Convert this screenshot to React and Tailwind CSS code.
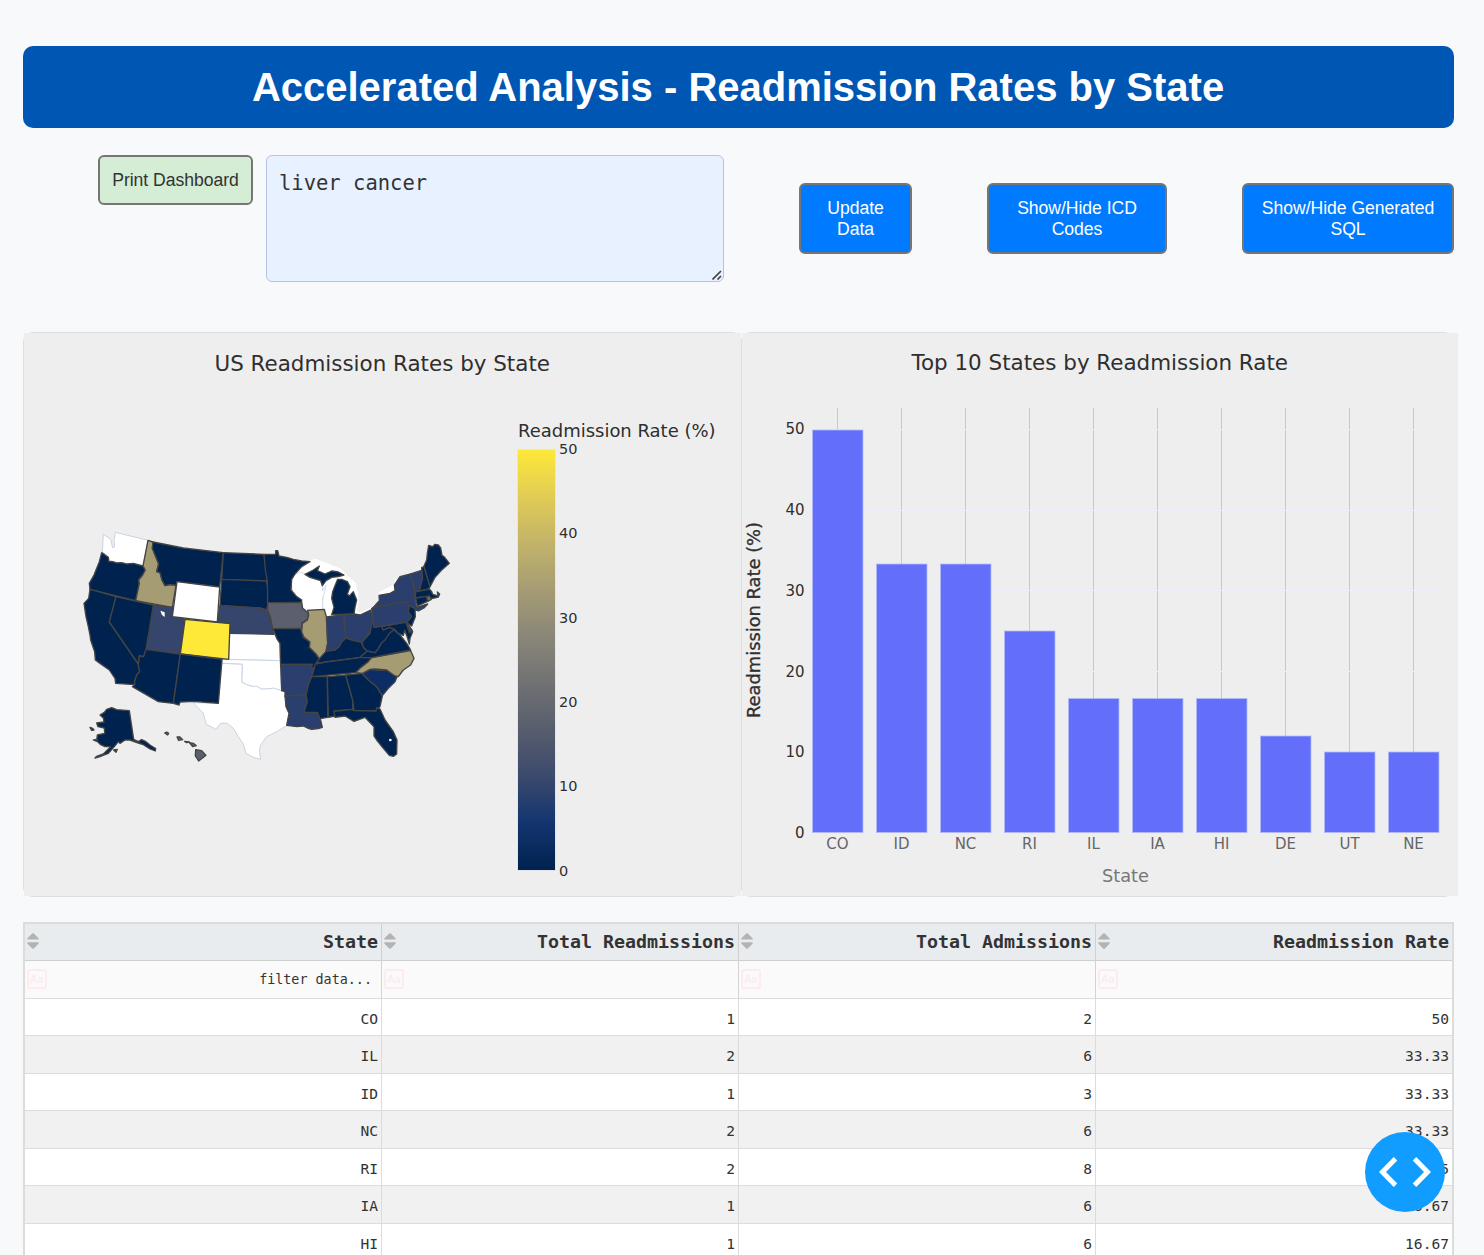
import React from "react";

const NAVY = "#00224e";
const SLATE = "#35456c";
const BLUE = "#2a3f6d";
const TAN = "#a59c74";
const GRAY = "#5b5f6e";

const STATES = [
  ["OR", NAVY, "95,98 104,104 115,112 117,125 125,124 140,129 155,128 170,132 190,130 219,138 226,150 218,165 206,180 208,190 197,242 60,208 58,190 72,165 88,125"],
  ["ID", TAN, "234,61 249,66 247,85 254,102 266,132 260,155 270,158 276,180 285,197 300,194 318,196 307,262 197,242 208,190 206,180 218,165 226,150 219,138"],
  ["MT", NAVY, "249,66 340,84 460,98 449,201 321,185 318,196 300,193 285,197 276,180 270,158 260,155 266,132 254,102 247,85"],
  ["ND", NAVY, "460,98 582,103 586,130 592,183 455,178"],
  ["SD", NAVY, "455,178 592,183 590,190 594,200 594,255 588,270 570,264 550,263 450,256"],
  ["NE", SLATE, "450,256 550,263 570,264 588,270 594,276 602,300 606,325 612,343 478,340 480,311 442,306"],
  ["UT", SLATE, "250,255 311,263 306,290 345,297 331,402 228,388"],
  ["CO", "#fee838", "345,298 480,311 476,418 331,402"],
  ["CA", NAVY, "60,208 138,230 118,306 205,432 209,455 200,465 193,487 195,494 137,490 135,475 118,450 90,430 76,420 74,395 62,360 60,345 55,320 48,290 42,250 56,235"],
  ["NV", NAVY, "138,230 250,255 228,388 221,410 208,408 205,432 118,306"],
  ["AZ", NAVY, "228,388 331,402 310,550 265,545 187,500 195,493 193,487 200,465 209,455 205,435 208,408 221,410"],
  ["NM", NAVY, "331,402 456,418 445,550 370,544 330,546 327,555 310,550"],
  ["MN", NAVY, "582,103 617,103 617,92 623,92 627,108 650,112 670,118 695,123 720,125 695,140 675,162 665,178 663,210 680,230 695,240 694,248 593,248 592,185 586,150"],
  ["IA", GRAY, "593,248 695,247 698,265 715,280 715,292 708,302 696,308 697,320 692,326 608,326 602,295 593,270"],
  ["MO", NAVY, "608,326 692,325 696,340 700,352 720,366 718,382 738,402 748,418 738,432 735,445 722,443 727,433 632,433 630,370 620,355 614,338"],
  ["IL", TAN, "713,271 763,268 769,290 773,370 768,395 760,412 748,416 738,402 718,382 720,366 702,352 695,335 697,310 712,300 716,285"],
  ["UP", NAVY, "705,163 730,150 748,138 742,152 752,156 765,162 785,153 805,156 822,165 805,170 785,172 768,182 757,197 752,182 720,172"],
  ["MI", NAVY, "803,178 815,178 832,185 840,200 832,222 838,228 850,215 860,240 855,262 852,282 785,284 792,262 785,235 788,215 797,192"],
  ["IN", BLUE, "770,291 820,284 828,353 815,365 808,380 795,390 768,395 773,370"],
  ["OH", BLUE, "822,284 852,282 870,285 902,270 908,300 900,335 888,352 876,368 850,362 828,353"],
  ["KY", NAVY, "738,430 748,416 768,394 795,390 808,380 815,366 828,354 850,362 873,366 882,385 892,393 870,412"],
  ["TN", NAVY, "736,432 768,426 870,413 905,412 895,425 870,445 857,458 725,470 730,450"],
  ["AR", BLUE, "632,433 727,433 722,443 733,445 725,470 715,495 708,525 645,529 645,515 635,512"],
  ["LA", BLUE, "645,528 708,525 712,545 702,577 742,577 750,592 757,622 745,626 725,628 715,625 700,618 680,620 650,616 657,580 648,560"],
  ["MS", NAVY, "725,470 772,470 773,592 750,596 742,577 702,577 712,545 708,525 715,495"],
  ["AL", NAVY, "772,470 827,465 848,540 848,568 792,573 795,588 775,592"],
  ["GA", NAVY, "827,465 878,460 895,480 920,500 937,528 930,560 918,573 852,572 848,540"],
  ["FL", NAVY, "792,574 848,568 852,572 918,573 920,563 930,567 945,600 970,635 981,660 980,702 970,709 958,706 940,685 920,660 912,648 912,620 885,592 852,604 825,588 795,592"],
  ["SC", "#0d2d66", "876,460 900,448 930,451 948,450 982,468 975,485 955,505 937,527 920,500 895,480"],
  ["NC", TAN, "857,458 870,445 895,425 905,413 1022,392 1032,415 1022,435 1000,450 985,470 975,468 950,450 915,447 900,448 878,460"],
  ["VA", NAVY, "870,412 892,393 915,398 925,385 935,368 945,355 958,335 972,330 990,345 1010,370 1022,390 905,413"],
  ["WV", NAVY, "908,300 912,322 935,318 940,330 958,322 974,328 958,340 945,360 935,368 925,385 915,398 892,393 880,382 876,367 900,340"],
  ["MD", NAVY, "935,320 1008,306 1018,335 1028,335 1020,355 1018,372 1012,352 1004,330 1000,346 985,340 974,328 958,322 940,330"],
  ["DE", "#3e4b6c", "1008,306 1014,312 1027,332 1018,338"],
  ["PA", BLUE, "905,265 915,262 1005,245 1018,258 1015,275 1025,290 1010,306 912,322"],
  ["NY", BLUE, "908,264 928,242 927,226 960,220 975,212 973,195 990,170 1022,162 1034,215 1036,250 1040,262 1073,252 1062,264 1045,273 1032,268 1018,258 1005,245 915,262"],
  ["NJ", NAVY, "1018,258 1035,266 1036,290 1025,318 1010,308 1025,290 1015,275"],
  ["VT", BLUE, "1022,162 1055,151 1058,175 1048,212 1036,215"],
  ["NH", NAVY, "1055,143 1062,140 1080,200 1075,208 1048,213 1058,175"],
  ["ME", NAVY, "1062,138 1070,120 1072,100 1076,76 1088,80 1095,73 1105,75 1112,84 1116,106 1124,112 1138,130 1115,150 1095,172 1080,200"],
  ["MA", NAVY, "1036,216 1078,207 1085,215 1088,223 1104,228 1102,216 1109,222 1105,231 1085,236 1072,229 1037,234"],
  ["CT", NAVY, "1037,234 1070,229 1073,244 1042,258"],
  ["RI", "#74736f", "1070,229 1078,228 1084,238 1073,244"],
  ["AK", NAVY, "90,585 103,577 110,568 125,563 140,569 178,572 191,658 205,665 215,659 226,664 240,675 257,686 256,693 240,687 220,674 205,669 180,660 165,660 150,670 145,665 133,680 115,700 95,708 75,714 80,709 100,702 122,680 105,680 92,674 80,662 82,645 104,640 103,624 84,620 80,609 102,606 100,594"],
  ["AK1", NAVY, "60,622 68,625 72,630 65,631"],
  ["AK2", NAVY, "131,690 142,688 138,697"],
  ["AK3", NAVY, "70,660 82,658 80,664"],
  ["HI1", GRAY, "284,639 290,636 296,640 293,645"],
  ["HI2", GRAY, "321,651 330,651 338,659 326,661"],
  ["HI3", GRAY, "344,664 358,666 350,668"],
  ["HI4", GRAY, "358,668 370,670 379,677 368,680"],
  ["HI5", GRAY, "377,689 395,692 408,706 386,723 376,708"],
];

const BLANK_STATES = [
  "97,98 100,43 122,58 128,84 134,80 132,62 136,37 234,61 219,138 170,132 117,125 110,105",
  "480,311 612,343 628,365 630,422 476,418",
  "456,418 630,422 635,512 600,507 575,508 550,500 530,494 515,486 517,433 456,430",
  "456,430 517,433 515,486 530,494 550,500 558,498 575,507 600,506 610,504 635,512 646,515 648,560 657,580 652,616 620,635 590,650 572,675 568,690 572,718 550,712 528,700 520,672 505,650 490,625 472,610 452,610 437,628 408,612 400,580 370,548 445,550",
  "663,180 675,162 690,156 750,178 757,196 758,212 768,196 758,235 758,268 710,270 698,265 695,240 668,220",
];

const LAKES =
  "673,162 695,133 735,116 770,129 810,145 824,158 842,174 857,189 864,215 866,245 860,272 870,280 900,263 924,245 926,216 958,202 972,192 976,178 985,180 975,212 955,224 930,230 928,246 902,272 870,288 852,284 852,230 800,230 795,284 780,290 765,288 758,268 758,190";

function ReadmissionMap() {
  return (
    <svg className="absolute left-[46px] top-[187px]" width="390" height="250" viewBox="0 0 1170 750">
      {BLANK_STATES.map((p) => (
        <polygon key={p} points={p} fill="#fff" stroke="#c8d4e3" strokeWidth="3" />
      ))}
      <polygon points={LAKES} fill="#fff" />
      <polyline points="675,162 690,156 720,168 750,178 757,196 758,212 768,196 759,235 758,268" fill="none" stroke="#d5dfeb" strokeWidth="3" />
      {STATES.map(([id, fill, p]) => (
        <polygon key={id} points={p} fill={fill} stroke="#444" strokeWidth="4" strokeLinejoin="round" />
      ))}
      <polygon points="321,185 449,201 442,306 307,290" fill="#fff" stroke="#444" strokeWidth="4" />
      <polygon points="271,272 284,277 284,291 276,285" fill="#fff" />
      <circle cx="961" cy="660" r="4" fill="#fff" />
    </svg>
  );
}

const SCALE_TICKS = [[50, 454], [40, 538], [30, 623], [20, 707], [10, 791], [0, 876]];

function MapPanel() {
  return (
    <div className="relative h-[565px] w-[719px] shrink-0 rounded-[10px] border border-[#ddd]">
      <div className="relative h-[563px] w-[717px] bg-[#eee]">
        <ReadmissionMap />
        <svg className="absolute left-0 top-0" width="717" height="563" viewBox="24 333 717 563" fontFamily="'DejaVu Sans', sans-serif" fill="#2f2f2f">
          <defs>
            <linearGradient id="cividis" x1="0" y1="1" x2="0" y2="0">
              <stop offset="0" stopColor="#00224e" />
              <stop offset="0.111" stopColor="#123570" />
              <stop offset="0.222" stopColor="#3b496c" />
              <stop offset="0.333" stopColor="#575d6d" />
              <stop offset="0.444" stopColor="#707173" />
              <stop offset="0.556" stopColor="#8a8678" />
              <stop offset="0.667" stopColor="#a59c74" />
              <stop offset="0.778" stopColor="#c3b369" />
              <stop offset="0.889" stopColor="#e1cc55" />
              <stop offset="1" stopColor="#fee838" />
            </linearGradient>
          </defs>
          <text x="214.5" y="371" fontSize="21" textLength="335.5" lengthAdjust="spacingAndGlyphs">US Readmission Rates by State</text>
          <text x="518" y="437" fontSize="17.5" textLength="197.5" lengthAdjust="spacingAndGlyphs">Readmission Rate (%)</text>
          <rect x="517.5" y="449.5" width="38" height="421" fill="url(#cividis)" stroke="#e4e4ea" />
          {SCALE_TICKS.map(([n, y]) => (
            <text key={n} x="559" y={y} fontSize="14.5">{n}</text>
          ))}
        </svg>
      </div>
    </div>
  );
}

const BARS = [
  ["CO", 430], ["ID", 564], ["NC", 564], ["RI", 631], ["IL", 698.5],
  ["IA", 698.5], ["HI", 698.5], ["DE", 736], ["UT", 752], ["NE", 752],
];
const Y_TICKS = [[50, 429], [40, 510], [30, 590.5], [20, 671.5], [10, 752], [0, 832.5]];

function BarPanel() {
  return (
    <div className="relative -ml-px h-[565px] w-[713px] shrink-0 rounded-[10px] border border-[#ddd]">
      <div className="h-[563px] w-[716px] bg-[#eee]">
        <svg width="716" height="563" viewBox="742 333 716 563" fontFamily="'DejaVu Sans', sans-serif" fill="#2f2f2f">
          <text x="911.5" y="370" fontSize="21" textLength="376.5" lengthAdjust="spacingAndGlyphs">Top 10 States by Readmission Rate</text>
          {BARS.map(([s], i) => (
            <line key={s} x1={837.5 + i * 64} x2={837.5 + i * 64} y1="408" y2="832" stroke="#c8c8c8" />
          ))}
          {Y_TICKS.map(([n, y]) => (
            <g key={n}>
              <line x1="806" x2="1445" y1={Math.floor(y) + 0.5} y2={Math.floor(y) + 0.5} stroke="#ebf0f8" />
              <text x="804.5" y={y + 5} fontSize="15" textAnchor="end">{n}</text>
            </g>
          ))}
          {BARS.map(([s, y], i) => (
            <g key={s}>
              <rect x={812.5 + i * 64} y={y} width="50.5" height={832.5 - y} fill="#636efa" stroke="#b4bbf9" strokeWidth="0.8" />
              <text x={837.5 + i * 64} y="849" fontSize="15" textAnchor="middle" fill="#666">{s}</text>
            </g>
          ))}
          <text x="1102" y="882" fontSize="17.3" textLength="47" lengthAdjust="spacingAndGlyphs" fill="#777">State</text>
          <text transform="translate(760 718) rotate(-90)" fontSize="17" textLength="196" lengthAdjust="spacingAndGlyphs" stroke="#2f2f2f" strokeWidth="0.3">Readmission Rate (%)</text>
        </svg>
      </div>
    </div>
  );
}

const COLUMNS = ["State", "Total Readmissions", "Total Admissions", "Readmission Rate"];
const ROWS = [
  ["CO", "1", "2", "50"],
  ["IL", "2", "6", "33.33"],
  ["ID", "1", "3", "33.33"],
  ["NC", "2", "6", "33.33"],
  ["RI", "2", "8", "25"],
  ["IA", "1", "6", "16.67"],
  ["HI", "1", "6", "16.67"],
];

function DataTable() {
  return (
    <div className="mt-[25px] w-[1431px] border-2 border-b-0 border-[#dcdcdc] font-['DejaVu_Sans_Mono',monospace] text-[#333]">
      <div className="grid h-[37px] grid-cols-[357px_357px_357px_356px] border-b border-[#d0d0d0] bg-[#e9ecef]">
        {COLUMNS.map((c, i) => (
          <div key={c} className={`flex items-center justify-between pl-[2px] pr-[3px] ${i < 3 ? "border-r border-[#d0d0d0]" : ""}`}>
            <svg width="12" height="16" viewBox="0 0 12 16" fill="#b3b3b3" className="mb-[2px]">
              <path d="M0.3 6.6 V5.6 L5.2 0.5 Q6 -0.2 6.8 0.5 L11.7 5.6 V6.6 Z M0.3 9.2 H11.7 V10.4 L6.8 15.4 Q6 16.1 5.2 15.4 L0.3 10.4 Z" />
            </svg>
            <span className="text-[18.3px] font-bold leading-none">{c}</span>
          </div>
        ))}
      </div>
      <div className="grid h-[38px] grid-cols-[357px_357px_357px_356px] border-b border-[#dcdcdc] bg-[#fafafa]">
        {COLUMNS.map((c, i) => (
          <div key={c} className={`flex items-center justify-between pl-[2px] pr-[9px] ${i < 3 ? "border-r border-[#d3d3d3]" : ""}`}>
            <span className="mb-[1px] flex h-5 w-5 items-center justify-center rounded-[3px] border-2 border-[#fdebf0] font-['DejaVu_Sans',sans-serif] text-[10.5px] leading-none text-[#fde8ee]">Aa</span>
            {i === 0 && <span className="pt-[2px] text-[13.4px]">filter data...</span>}
          </div>
        ))}
      </div>
      {ROWS.map((r, ri) => (
        <div key={r[0]} className={`grid grid-cols-[357px_357px_357px_356px] border-b border-[#dcdcdc] ${ri % 2 ? "h-[38px] bg-[#f1f1f1]" : "h-[37px] bg-white"}`}>
          {r.map((v, i) => (
            <div key={i} className={`flex items-center justify-end pr-[3px] text-[14.6px] leading-none ${ri % 2 ? "pt-[3px]" : "pt-[5px]"} ${i < 3 ? "border-r border-[#dcdcdc]" : ""}`}>{v}</div>
          ))}
        </div>
      ))}
    </div>
  );
}

const BLUE_BUTTON = "mt-7 h-[71px] rounded-md border-2 border-[#767676] bg-[#007bff] text-center text-[17.6px] leading-[21px] tracking-[-0.04px] text-white";

export default function App() {
  return (
    <div className="relative h-[1255px] w-[1484px] overflow-hidden bg-[#f8f9fb] pl-[23px] pt-[46px] font-['Liberation_Sans',Arial,sans-serif]">
      <h1 className="flex h-[82px] w-[1431px] items-center justify-center rounded-[10px] bg-[#0056b3] pr-px text-[40px] font-bold text-white">
        Accelerated Analysis - Readmission Rates by State
      </h1>
      <div className="mt-[27px] flex h-[177px] w-[1431px] items-start">
        <button className="ml-[75px] h-[50px] w-[155px] rounded-md border-2 border-[#767676] bg-[#d4edd4] text-[17.6px] tracking-[-0.04px] text-[#333]">Print Dashboard</button>
        <div className="relative ml-[13px] h-[127px] w-[458px] rounded-md border border-[#b3c5e3] bg-[#e7f1ff] pl-[12px] pt-[12px] font-['DejaVu_Sans_Mono',monospace] text-[20.5px] leading-[30px] text-[#333]">
          liver cancer
          <svg className="absolute bottom-[1px] right-[1px]" width="10" height="10" viewBox="0 0 10 10" stroke="#444" strokeWidth="1.7">
            <path d="M0.5 9.5 L9 1 M5.5 9.5 L9 6" />
          </svg>
        </div>
        <button className={`${BLUE_BUTTON} ml-[75px] w-[113px]`}>Update<br />Data</button>
        <button className={`${BLUE_BUTTON} ml-[75px] w-[180px]`}>Show/Hide ICD<br />Codes</button>
        <button className={`${BLUE_BUTTON} ml-[75px] w-[212px]`}>Show/Hide Generated<br />SQL</button>
      </div>
      <div className="flex">
        <MapPanel />
        <BarPanel />
      </div>
      <DataTable />
      <button className="absolute left-[1365px] top-[1132px] flex h-20 w-20 items-center justify-center rounded-full bg-[#119dff]">
        <svg width="52" height="30" viewBox="0 0 52 30" fill="none" stroke="#fff" strokeWidth="5">
          <path d="M16.5 1.8 L3.5 15 L16.5 28.2 M35.5 1.8 L48.5 15 L35.5 28.2" />
        </svg>
      </button>
    </div>
  );
}
